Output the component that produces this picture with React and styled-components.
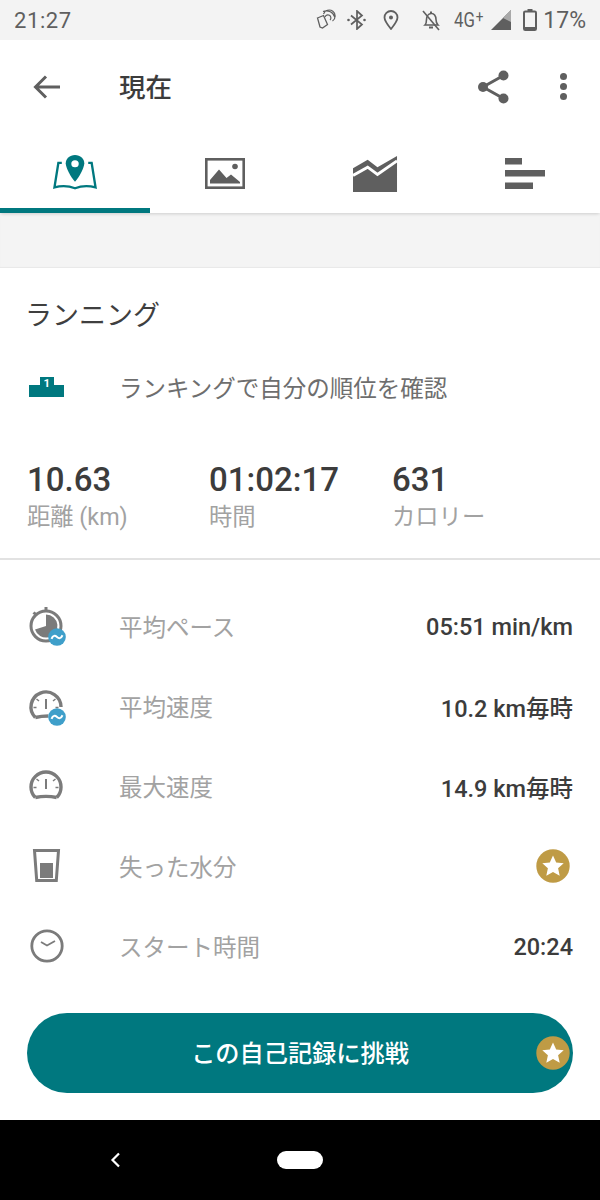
import React from 'react'
import styled, { createGlobalStyle } from 'styled-components'

const Global = createGlobalStyle`
  html, body { margin: 0; padding: 0; background: #fff; }
  * { box-sizing: border-box; }
  body { font-family: Roboto, "Noto Sans CJK JP", sans-serif; }
`

const GREY = '#5f5f5f'
const ICON = '#7b7b7b'
const TEAL = '#00787f'

function Star() {
  return (
    <svg width="34" height="34" viewBox="0 0 34 34">
      <circle cx="17" cy="17" r="16.7" fill="#bf9b45" />
      <path d="M17 6.500l3.200 7 7.500.8-5.600 5 1.600 7.500L17 22.900l-6.700 3.900 1.600-7.500-5.600-5 7.500-.8z" fill="#fff" />
    </svg>
  )
}

function Wave() {
  return (
    <Badge>
      <svg width="18" height="18" viewBox="0 0 18 18">
        <circle cx="9" cy="9" r="8.800" fill="#3f9fca" />
        <path d="M3.500 10.800c1.500-3.600 3.500-3.600 5.500-1.800s3.800 1.800 5.500-1.800" fill="none" stroke="#fff" strokeWidth="2" />
      </svg>
    </Badge>
  )
}

function Stopwatch() {
  return (
    <IconBox>
      <IconSvg width="36" height="36" viewBox="0 0 36 36">
        <rect x="16.500" y="-1" width="3" height="4" fill={ICON} />
        <path d="M4.500 5.500l2-2 3 2.500-2 2z" fill={ICON} />
        <circle cx="18" cy="18" r="15" fill="none" stroke={ICON} strokeWidth="3" />
        <path d="M18 18V6.500A11.500 11.500 0 1 1 7 21.500z" fill={ICON} />
      </IconSvg>
      <Wave />
    </IconBox>
  )
}

function Gauge({ cut }) {
  return (
    <IconBox>
      <IconSvg width="36" height="36" viewBox="0 0 36 36">
        <path
          d={cut ? 'M7.300 29.500A15 15 0 1 1 33 19' : 'M7.300 29.500A15 15 0 1 1 28.700 29.500'}
          fill="none"
          stroke={ICON}
          strokeWidth="3.400"
        />
        <path d={cut ? 'M7.300 29.500c4-1 9-1.500 13-1.500' : 'M7.300 29.500c6-1.300 15.400-1.300 21.400 0'} fill="none" stroke={ICON} strokeWidth="3.400" />
        <rect x="17" y="11" width="2" height="10" fill={ICON} />
        <path d="M8.500 11l2.500 2M27.500 11L25 13M5.500 19.500h3M27.500 19.500h3" stroke={ICON} strokeWidth="1.500" />
      </IconSvg>
      {cut && <Wave />}
    </IconBox>
  )
}

function Glass() {
  return (
    <IconBox>
      <IconSvg width="36" height="36" viewBox="0 0 36 36">
        <path d="M6.500 2.500H30.500L28.300 32.500H8.700z" fill="none" stroke={ICON} strokeWidth="3" />
        <rect x="12" y="15" width="13" height="15" fill={ICON} />
      </IconSvg>
    </IconBox>
  )
}

function Clock() {
  return (
    <IconBox>
      <IconSvg width="36" height="36" viewBox="0 0 36 36">
        <circle cx="19" cy="18" r="15.200" fill="none" stroke={ICON} strokeWidth="2.800" />
        <path d="M13 14l6 3.500 8-4.500" fill="none" stroke={ICON} strokeWidth="1.800" />
      </IconSvg>
    </IconBox>
  )
}

const rows = [
  { label: '平均ペース', value: '05:51 min/km', icon: <Stopwatch /> },
  { label: '平均速度', value: '10.2 km毎時', icon: <Gauge cut /> },
  { label: '最大速度', value: '14.9 km毎時', icon: <Gauge /> },
  { label: '失った水分', star: true, icon: <Glass /> },
  { label: 'スタート時間', value: '20:24', icon: <Clock /> },
]

const stats = [
  { value: '10.63', label: '距離 (km)' },
  { value: '01:02:17', label: '時間' },
  { value: '631', label: 'カロリー' },
]

export default function App() {
  return (
    <Page>
      <Global />
      <StatusBar>
        <Clocktext>21:27</Clocktext>
        <StatusIcons>
          <svg width="22" height="22" viewBox="0 0 22 22">
            <path d="M2.500 9l6-2.500 4 9-5 3.500-2.500-1z" fill="none" stroke={GREY} strokeWidth="1.300" />
            <path d="M10 8a3 3 0 1 1 5 3M8.500 5a6 6 0 1 1 9 7M8 2.500a9 9 0 0 1 12 6" fill="none" stroke={GREY} strokeWidth="1.200" />
          </svg>
          <Spaced $w={10}>
            <svg width="20" height="20" viewBox="0 0 20 20">
              <path d="M4 5.500l11 9-5 4.500V1l5 4.500-11 9" fill="none" stroke={GREY} strokeWidth="1.700" />
              <circle cx="1.500" cy="10" r="1.300" fill={GREY} />
              <circle cx="17.500" cy="10" r="1.300" fill={GREY} />
            </svg>
          </Spaced>
          <Spaced $w={16}>
            <svg width="16" height="20" viewBox="0 0 16 20">
              <path d="M8 19C4 14 1.500 11 1.500 7.500a6.500 6.500 0 0 1 13 0C14.500 11 12 14 8 19z" fill="none" stroke={GREY} strokeWidth="1.800" />
              <circle cx="8" cy="7.500" r="2" fill={GREY} />
            </svg>
          </Spaced>
          <Spaced $w={21}>
            <svg width="22" height="22" viewBox="0 0 22 22">
              <path d="M5 16c1.500-1.500 1.500-3 1.500-5.500S8 5 11 4.500 16 7 16 10.500 16.500 14.500 18 16z" fill="none" stroke={GREY} strokeWidth="1.600" />
              <path d="M9 18.500h4" stroke={GREY} strokeWidth="2" />
              <path d="M10 3.500h2" stroke={GREY} strokeWidth="2" />
              <path d="M3 2l16 19" stroke={GREY} strokeWidth="1.600" />
            </svg>
          </Spaced>
          <NetText>4G<NetPlus>+</NetPlus></NetText>
          <svg width="22" height="22" viewBox="0 0 22 22">
            <path d="M1 21L21 1v20z" fill={GREY} />
            <path d="M13 9l8-8v12z" fill="#a9a9a9" />
          </svg>
          <Spaced $w={11}>
            <svg width="14" height="22" viewBox="0 0 14 22">
              <path d="M4.500 0h5v2h-5z" fill={GREY} />
              <rect x="1" y="2.500" width="12" height="18.500" rx="1.300" fill="none" stroke={GREY} strokeWidth="2" />
              <rect x="2" y="18" width="10" height="3" fill={GREY} />
            </svg>
          </Spaced>
          <Percent>17%</Percent>
        </StatusIcons>
      </StatusBar>

      <Header>
        <BackIcon>
          <svg width="30" height="30" viewBox="0 0 30 30">
            <path d="M29 15H5M15 4.500L4.500 15 15 25.500" fill="none" stroke={GREY} strokeWidth="3" />
          </svg>
        </BackIcon>
        <HeaderTitle>現在</HeaderTitle>
        <HeaderActions>
          <svg width="31" height="34" viewBox="0 0 31 34">
            <path d="M25.500 5.500L5 17l20.500 11.500" fill="none" stroke={GREY} strokeWidth="3" />
            <circle cx="25.500" cy="5.500" r="5" fill={GREY} />
            <circle cx="5" cy="17" r="5" fill={GREY} />
            <circle cx="25.500" cy="28.500" r="5" fill={GREY} />
          </svg>
          <Dots>
            <i />
            <i />
            <i />
          </Dots>
        </HeaderActions>
      </Header>

      <Tabs>
        <Tab $active>
          <svg width="45" height="37" viewBox="0 0 46 40" preserveAspectRatio="none">
            <path d="M9 8.500H5.500L1.500 35c7-2 14-2 21 1 7-3 14-3 21-1L39.500 8.500H36" fill="none" stroke={TEAL} strokeWidth="2.400" />
            <path d="M22.500 0C17 0 13 4 13 9c0 4.500 5 15 9.500 20C27 24 32 13.500 32 9c0-5-4-9-9.500-9z" fill={TEAL} />
            <circle cx="22.500" cy="9.500" r="3.800" fill="#fff" />
          </svg>
        </Tab>
        <Tab>
          <svg width="40" height="31" viewBox="0 0 40 31">
            <rect x="1.300" y="1.300" width="37.400" height="28.400" fill="none" stroke={GREY} strokeWidth="2.600" />
            <path d="M5 25.500V22l9-10.500 7.500 8.500 4.500-3.500 9 7.500v1.500z" fill={GREY} />
            <circle cx="30" cy="8.500" r="2.800" fill={GREY} />
          </svg>
        </Tab>
        <Tab>
          <svg width="45" height="37" viewBox="0 0 46 38" preserveAspectRatio="none">
            <path d="M0 13.500L15 5l10 7.500L45 1v11L25 25.500 15 18 0 26z" fill={GREY} />
            <path d="M0 38V22l15-8 10 8 20-14v30z" fill={GREY} />
            <path d="M0 21l15-8.500L25 20 45 6" fill="none" stroke="#fff" strokeWidth="3" />
          </svg>
        </Tab>
        <Tab>
          <svg width="40" height="31" viewBox="0 0 40 31">
            <rect x="0" y="0" width="17" height="6.500" fill={GREY} />
            <rect x="0" y="12" width="40" height="6.500" fill={GREY} />
            <rect x="0" y="24.500" width="28" height="6.500" fill={GREY} />
          </svg>
        </Tab>
      </Tabs>

      <Band />

      <Content>
        <SportTitle>ランニング</SportTitle>
        <RankRow>
          <RankIcon>
            <svg width="35" height="20" viewBox="0 0 35 20">
              <path d="M0 8h11V0h14v8h10v12H0z" fill={TEAL} />
              <text x="17.800" y="10" fontSize="11.500" fontWeight="700" fill="#fff" textAnchor="middle" fontFamily="Roboto, sans-serif">1</text>
            </svg>
          </RankIcon>
          <RankText>ランキングで自分の順位を確認</RankText>
        </RankRow>

        <Stats>
          {stats.map((s) => (
            <Stat key={s.label}>
              <StatValue>{s.value}</StatValue>
              <StatLabel>{s.label}</StatLabel>
            </Stat>
          ))}
        </Stats>

        <Rows>
          {rows.map((r) => (
            <Row key={r.label}>
              {r.icon}
              <RowLabel>{r.label}</RowLabel>
              {r.star ? (
                <RowStar>
                  <Star />
                </RowStar>
              ) : (
                <RowValue>{r.value}</RowValue>
              )}
            </Row>
          ))}
        </Rows>

        <Challenge>
          <ChallengeText>この自己記録に挑戦</ChallengeText>
          <ChallengeStar>
            <Star />
          </ChallengeStar>
        </Challenge>
      </Content>

      <NavBar>
        <svg width="14" height="18" viewBox="0 0 14 18">
          <path d="M11 2.500L4.500 9l6.500 6.500" fill="none" stroke="#fff" strokeWidth="2.200" />
        </svg>
        <HomePill />
      </NavBar>
    </Page>
  )
}

const Page = styled.div`
  width: 600px;
  height: 1200px;
  display: flex;
  flex-direction: column;
  overflow: hidden;
  background: #fff;
`

const StatusBar = styled.div`
  height: 40px;
  background: #f3f3f3;
  display: flex;
  align-items: center;
  justify-content: space-between;
  padding: 0 14px;
  color: ${GREY};
`

const Clocktext = styled.span`
  font-size: 22px;
  letter-spacing: 0.6px;
`

const StatusIcons = styled.div`
  display: flex;
  align-items: center;
  gap: 0;
`

const Spaced = styled.span`
  display: flex;
  margin-left: ${(p) => p.$w}px;
`

const NetText = styled.span`
  display: flex;
  font-size: 21px;
  line-height: 24px;
  margin-left: 12px;
  width: 36px;
  transform: scaleX(0.8);
  transform-origin: left;
`

const NetPlus = styled.span`
  font-size: 17px;
  line-height: 17px;
  margin-left: 1px;
`

const Percent = styled.span`
  font-size: 23px;
  margin-left: 6px;
`

const Header = styled.div`
  height: 93px;
  display: flex;
  align-items: center;
  padding: 0 33px 0 31px;
`

const BackIcon = styled.div`
  display: flex;
  width: 88px;
`

const HeaderTitle = styled.div`
  font-size: 26.500px;
  font-weight: 500;
  color: #3c3c3c;
  padding-bottom: 3px;
`

const HeaderActions = styled.div`
  margin-left: auto;
  display: flex;
  align-items: center;
  gap: 51px;
`

const Dots = styled.div`
  display: flex;
  flex-direction: column;
  gap: 3px;
  i {
    display: block;
    width: 7px;
    height: 7px;
    border-radius: 50%;
    background: ${GREY};
  }
`

const Tabs = styled.div`
  height: 80px;
  display: grid;
  grid-template-columns: repeat(4, 150px);
  box-shadow: 0 2px 3px -1px rgba(0, 0, 0, 0.16);
  position: relative;
`

const Tab = styled.div`
  display: flex;
  align-items: center;
  justify-content: center;
  padding-top: 6px;
  border-bottom: 5px solid ${(p) => (p.$active ? TEAL : 'transparent')};
`

const Band = styled.div`
  height: 55px;
  background: #f4f4f4;
  box-shadow: inset 0 -1px 1px rgba(0, 0, 0, 0.05);
`

const Content = styled.div`
  flex: 1;
  display: flex;
  flex-direction: column;
`

const SportTitle = styled.div`
  font-size: 27px;
  color: #3f3f3f;
  padding: 29px 25px 0;
  line-height: 38px;
`

const RankRow = styled.div`
  display: flex;
  align-items: center;
  padding: 0 27px;
  margin-top: 36px;
  height: 30px;
`

const RankIcon = styled.div`
  width: 92px;
  display: flex;
  padding: 1px 0 0 2px;
`

const RankText = styled.div`
  font-size: 23.500px;
  color: #6e6e6e;
  padding-top: 2px;
`

const Stats = styled.div`
  display: grid;
  grid-template-columns: 182px 183px 1fr;
  padding: 0 27px 24px;
  margin-top: 59px;
  border-bottom: 2px solid #e2e2e2;
`

const Stat = styled.div`
  display: flex;
  flex-direction: column;
`

const StatValue = styled.div`
  font-size: 33px;
  font-weight: 500;
  color: #3c3c3c;
  line-height: 40px;
`

const StatLabel = styled.div`
  font-size: 23.300px;
  color: #a2a2a2;
  line-height: 34px;
`

const Rows = styled.div`
  display: flex;
  flex-direction: column;
  padding: 26px 27px 0;
`

const Row = styled.div`
  height: 80px;
  display: flex;
  align-items: center;
`

const IconBox = styled.div`
  position: relative;
  width: 36px;
  height: 36px;
  margin-left: 1px;
  flex: none;
`

const IconSvg = styled.svg`
  display: block;
  overflow: visible;
`

const Badge = styled.div`
  position: absolute;
  right: -2px;
  bottom: -2px;
  width: 18px;
  height: 18px;
  display: flex;
`

const RowLabel = styled.div`
  margin-left: 55px;
  font-size: 23.500px;
  color: #a2a2a2;
`

const RowValue = styled.div`
  margin-left: auto;
  padding-top: 2px;
  font-size: 23.500px;
  font-weight: 500;
  color: #3c3c3c;
`

const RowStar = styled.div`
  margin-left: auto;
  margin-right: 3px;
  display: flex;
`

const Challenge = styled.div`
  position: relative;
  margin: 27px 27px 0;
  height: 80px;
  border-radius: 40px;
  background: ${TEAL};
  display: flex;
  align-items: center;
  justify-content: center;
`

const ChallengeText = styled.div`
  color: #fff;
  font-size: 24.200px;
  font-weight: 500;
  padding-bottom: 4px;
`

const ChallengeStar = styled.div`
  position: absolute;
  right: 3px;
  top: 23px;
  display: flex;
`

const NavBar = styled.div`
  height: 80px;
  background: #000;
  display: flex;
  align-items: center;
  padding-left: 108px;
  flex: none;
`

const HomePill = styled.div`
  width: 46px;
  height: 18px;
  border-radius: 9px;
  background: #fff;
  margin-left: 155px;
`
